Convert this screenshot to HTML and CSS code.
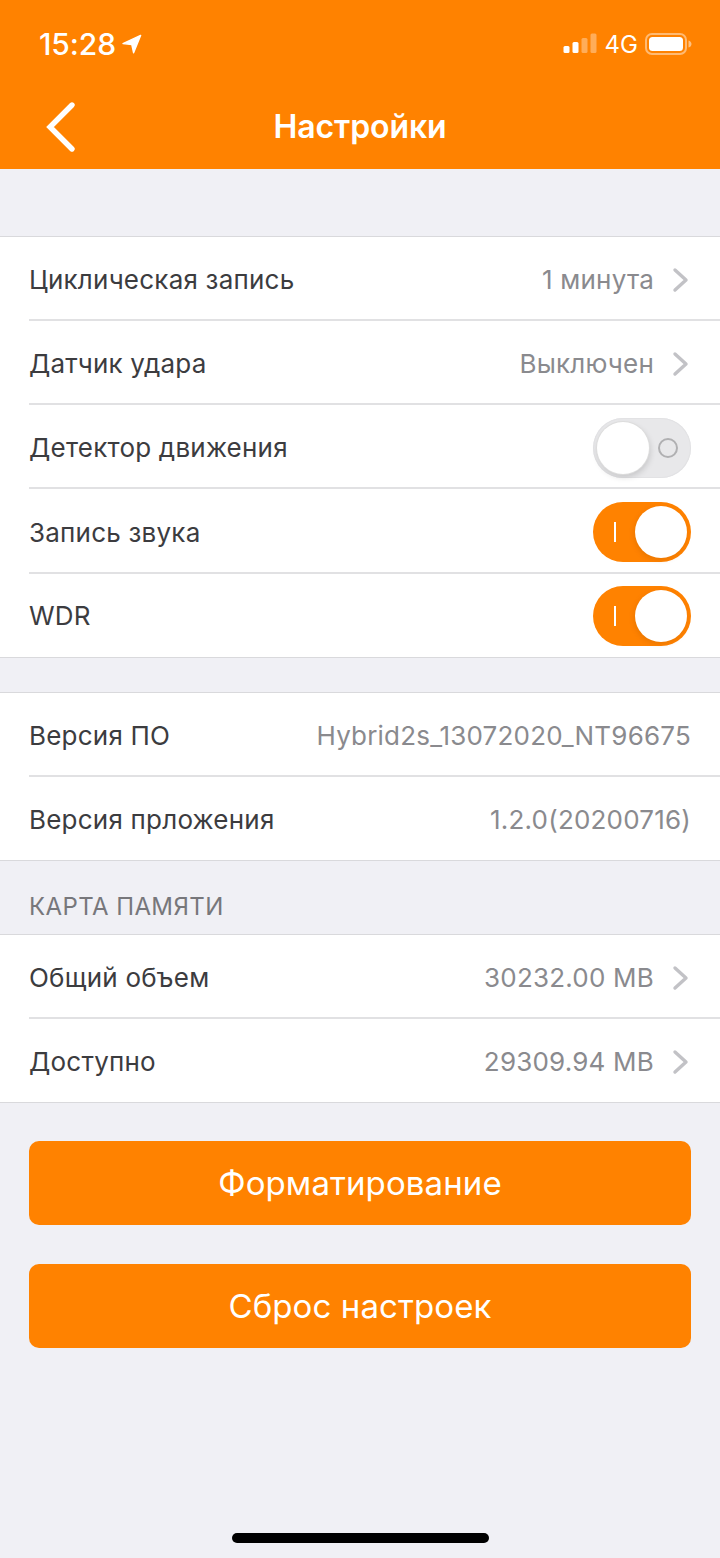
FILE: index.html
```
<!DOCTYPE html>
<html lang="ru">
<head>
<meta charset="utf-8">
<title>Настройки</title>
<link rel="stylesheet" href="styles.css">
</head>
<body>
<div class="page">
  <header class="header">
    <div class="status">
      <div class="status-left">
        <span class="time">15:28</span>
        <svg class="loc" width="20" height="20" viewBox="0 0 20 20"><path d="M1 9.6 L18.6 1.4 L11.6 18.8 L9.8 10.6 Z" fill="#fff" stroke="#fff" stroke-width="1.4" stroke-linejoin="round"/></svg>
      </div>
      <div class="status-right">
        <svg class="signal" width="34" height="22" viewBox="0 0 34 22"><rect x="0.5" y="13" width="6" height="7" rx="1.5" fill="#fff"/><rect x="9.5" y="9" width="6" height="11" rx="1.5" fill="#fff"/><rect x="18.5" y="5" width="6" height="15" rx="1.5" fill="#fff" fill-opacity=".35"/><rect x="27.5" y="0.5" width="6" height="19.5" rx="1.5" fill="#fff" fill-opacity=".35"/></svg>
        <span class="net">4G</span>
        <svg class="battery" width="47" height="22" viewBox="0 0 47 22"><rect x="1" y="1" width="40" height="20" rx="6" fill="none" stroke="#fff" stroke-opacity=".45" stroke-width="2"/><rect x="4" y="4" width="34" height="14" rx="3.5" fill="#fff"/><path d="M43.5 7.5 C45.5 8 46.5 9.5 46.5 11 C46.5 12.5 45.5 14 43.5 14.5 Z" fill="#fff" fill-opacity=".5"/></svg>
      </div>
    </div>
    <div class="nav">
      <svg class="back" width="32" height="52" viewBox="0 0 32 52"><path d="M27 4 L5 26 L27 48" fill="none" stroke="#fff" stroke-width="5.4" stroke-linecap="round" stroke-linejoin="miter"/></svg>
      <h1 class="title">Настройки</h1>
    </div>
  </header>

  <section class="group first">
    <div class="row"><span class="label">Циклическая запись</span><span class="right"><span class="value">1 минута</span><svg class="chev" width="18" height="26" viewBox="0 0 18 26"><path d="M3 3 L14 13 L3 23" fill="none" stroke="#c2c2c6" stroke-width="3.4" stroke-linecap="round" stroke-linejoin="round"/></svg></span></div>
    <div class="row"><span class="label">Датчик удара</span><span class="right"><span class="value">Выключен</span><svg class="chev" width="18" height="26" viewBox="0 0 18 26"><path d="M3 3 L14 13 L3 23" fill="none" stroke="#c2c2c6" stroke-width="3.4" stroke-linecap="round" stroke-linejoin="round"/></svg></span></div>
    <div class="row"><span class="label">Детектор движения</span><span class="toggle off"><span class="knob"></span><span class="mark-o"></span></span></div>
    <div class="row"><span class="label">Запись звука</span><span class="toggle on"><span class="mark-i"></span><span class="knob"></span></span></div>
    <div class="row"><span class="label">WDR</span><span class="toggle on"><span class="mark-i"></span><span class="knob"></span></span></div>
  </section>

  <section class="group second">
    <div class="row"><span class="label">Версия ПО</span><span class="value">Hybrid2s_13072020_NT96675</span></div>
    <div class="row"><span class="label">Версия прложения</span><span class="value">1.2.0(20200716)</span></div>
  </section>

  <div class="section-title">КАРТА ПАМЯТИ</div>

  <section class="group">
    <div class="row"><span class="label">Общий объем</span><span class="right"><span class="value">30232.00 MB</span><svg class="chev" width="18" height="26" viewBox="0 0 18 26"><path d="M3 3 L14 13 L3 23" fill="none" stroke="#c2c2c6" stroke-width="3.4" stroke-linecap="round" stroke-linejoin="round"/></svg></span></div>
    <div class="row"><span class="label">Доступно</span><span class="right"><span class="value">29309.94 MB</span><svg class="chev" width="18" height="26" viewBox="0 0 18 26"><path d="M3 3 L14 13 L3 23" fill="none" stroke="#c2c2c6" stroke-width="3.4" stroke-linecap="round" stroke-linejoin="round"/></svg></span></div>
  </section>

  <div class="actions">
    <button class="btn">Форматирование</button>
    <button class="btn">Сброс настроек</button>
  </div>

  <div class="home-wrap"><div class="home"></div></div>
</div>
</body>
</html>
```
FILE: styles.css
```
* { box-sizing: border-box; }
html, body { margin: 0; padding: 0; }
body { font-family: Inter, "Liberation Sans", sans-serif; background: #f0f0f5; }
.page { width: 720px; height: 1558px; display: flex; flex-direction: column; background: #f0f0f5; overflow: hidden; }

.header { height: 169px; background: #ff8200; color: #fff; flex: none; }
.status { height: 88px; display: flex; justify-content: space-between; align-items: center; padding: 0 28px 0 39px; }
.status-left { display: flex; align-items: center; gap: 6px; }
.time { font-size: 30px; font-weight: 500; letter-spacing: -0.1px; }
.status-right { display: flex; align-items: center; gap: 8px; }
.net { font-size: 24px; font-weight: 400; margin: 0 -1px 0 0; }
.nav { height: 81px; display: flex; align-items: center; justify-content: center; position: relative; padding-bottom: 4px; }
.back { position: absolute; left: 45px; top: 13px; }
.title { margin: 0; font-size: 32px; font-weight: 600; letter-spacing: -0.1px; }

.group { background: #fff; border-top: 1px solid #d9d9dc; border-bottom: 1px solid #d9d9dc; flex: none; }
.group.first { margin-top: 67px; }
.group.second { margin-top: 34px; }
.row { height: 84px; margin-left: 29px; padding: 3px 29px 0 0; display: flex; align-items: center; justify-content: space-between; border-bottom: 2px solid #e1e1e3; }
.row:last-child { border-bottom: 0; height: 83px; padding-top: 2px; }
.group.first .row:nth-child(4) { height: 85px; }
.group.first .row:last-child { padding-top: 0; }
.label { font-size: 26px; letter-spacing: 0.22px; color: #3c3c3f; }
.value { font-size: 26px; letter-spacing: 0.2px; color: #8a8a8e; }
.right { display: flex; align-items: center; gap: 18px; margin-right: 1px; }
.chev { display: block; }

.toggle { width: 98px; height: 60px; border-radius: 30px; display: flex; align-items: center; flex: none; }
.toggle .knob { width: 52px; height: 52px; border-radius: 50%; background: #fff; flex: none; }
.toggle.off { background: #e8e8ea; padding-left: 4px; box-shadow: inset 0 0 0 1px #e2e2e4; }
.toggle.off .knob { box-shadow: 0 0 0 1px #ddd, 1px 3px 6px rgba(0,0,0,.16); }
.mark-o { width: 20px; height: 20px; border-radius: 50%; border: 2px solid #b0b0b2; margin-left: 9px; }
.toggle.on { background: #ff8200; padding-left: 21px; }
.mark-i { width: 2px; height: 20px; background: #fff; }
.toggle.on .knob { margin-left: 19px; box-shadow: -1px 2px 5px rgba(160,80,0,.22); }

.section-title { height: 73px; flex: none; padding: 17px 29px 0; display: flex; align-items: center; font-size: 24px; color: #77777b; letter-spacing: 0.4px; }

.actions { margin-top: 38px; padding: 0 29px; display: flex; flex-direction: column; gap: 39px; flex: none; }
.btn { height: 84px; width: 100%; border: 0; border-radius: 10px; background: #ff8200; color: #fff; font-family: inherit; font-size: 33px; letter-spacing: 0.1px; font-weight: 400; }

.home-wrap { margin-top: auto; height: 25px; display: flex; justify-content: center; flex: none; }
.home { width: 257px; height: 10px; border-radius: 5px; background: #000; }
```
